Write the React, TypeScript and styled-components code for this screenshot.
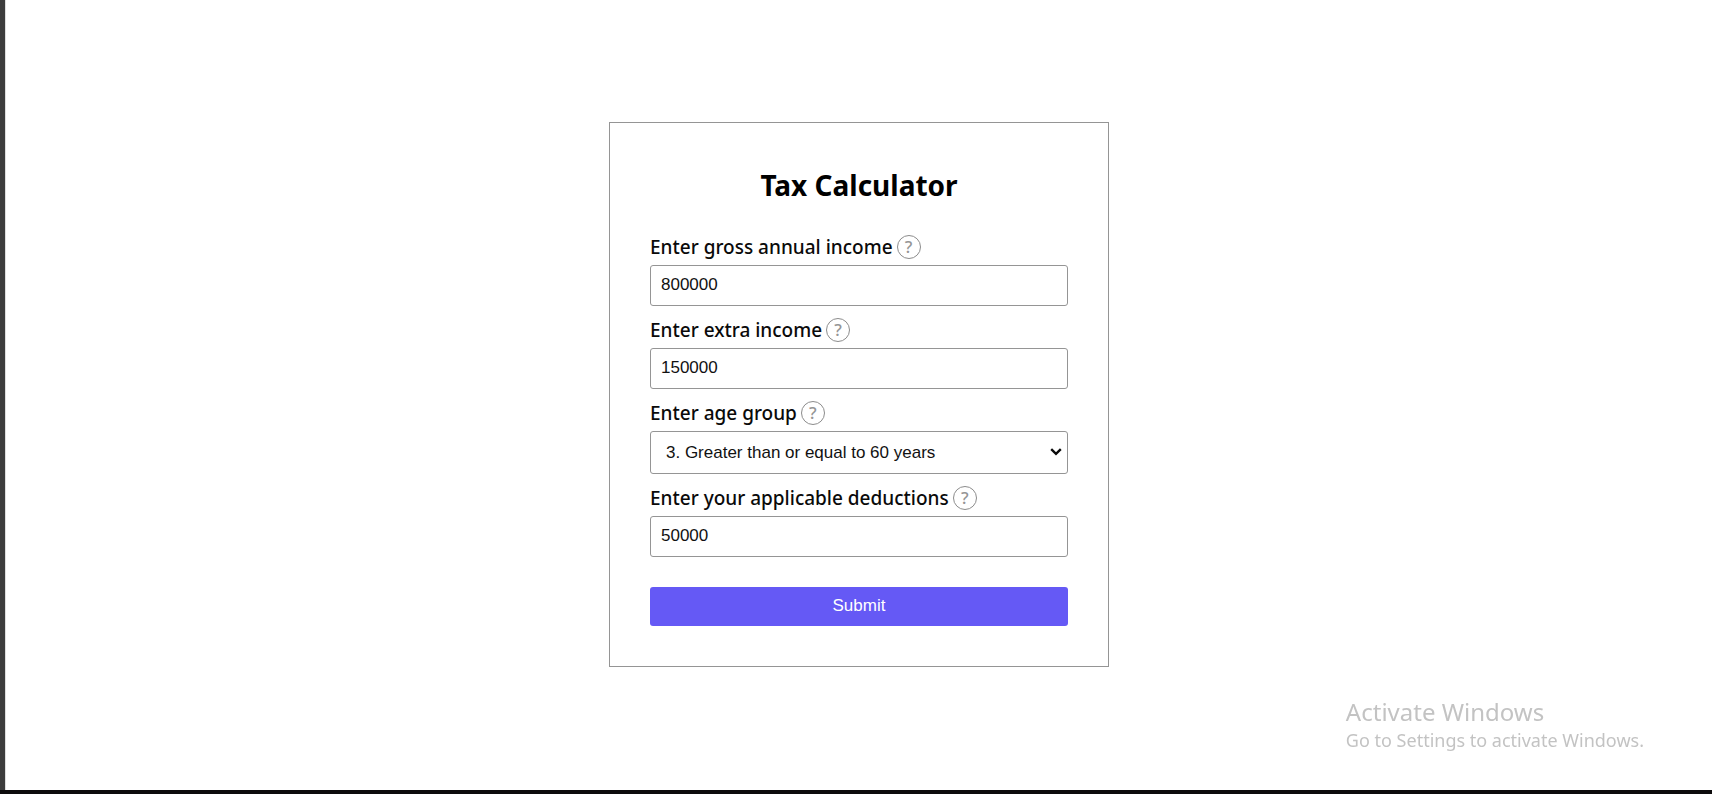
import { useState } from "react";
import styled, { createGlobalStyle } from "styled-components";

const GlobalStyle = createGlobalStyle`
  * { box-sizing: border-box; }
  body {
    margin: 0;
    background: #fff;
    color: #0a0a0a;
    font-family: "Segoe UI", "Noto Sans", sans-serif;
  }
`;

const Page = styled.div`
  display: flex;
  min-height: 100vh;
  border-bottom: 4px solid #0d0b0c;
`;

const Edge = styled.div`
  flex: none;
  width: 5px;
  background: #3c3c3c;
`;

const Main = styled.main`
  flex: 1;
  display: flex;
  align-items: center;
  justify-content: center;
  padding-bottom: 2px;
  border-left: 1px solid #dedede;
`;

const Card = styled.form`
  width: 500px;
  max-width: 100%;
  padding: 40px;
  border: 1px solid #959595;
`;

const Title = styled.h1`
  margin: 0 0 28px;
  color: #000;
  font-size: 28px;
  line-height: 44px;
  font-weight: 700;
  text-align: center;
`;

const Field = styled.div`
  margin-bottom: 12px;
`;

const LabelRow = styled.div`
  display: flex;
  align-items: center;
  gap: 4px;
  margin-bottom: 6px;
`;

const Label = styled.label`
  font-size: 19px;
  line-height: 24px;
  font-weight: 500;
`;

const HelpButton = styled.button`
  width: 24px;
  height: 24px;
  padding: 0;
  border: 1px solid #8c8c8c;
  border-radius: 50%;
  background: #fff;
  color: #959595;
  font-family: inherit;
  font-size: 17px;
  line-height: 22px;
  font-weight: 500;
  text-align: center;
`;

const TextInput = styled.input`
  display: block;
  width: 100%;
  height: 41px;
  padding: 0 10px;
  border: 1px solid #959595;
  border-radius: 3px;
  background: #fff;
  color: #111;
  font-family: "Liberation Sans", Arial, sans-serif;
  font-size: 17px;
`;

const SelectBox = styled.div`
  display: grid;
  align-items: center;

  > * {
    grid-area: 1 / 1;
  }
`;

const Select = styled.select`
  appearance: none;
  width: 100%;
  height: 43px;
  padding: 0 24px 0 15px;
  border: 1px solid #959595;
  border-radius: 3px;
  background: #fff;
  color: #111;
  font-family: "Liberation Sans", Arial, sans-serif;
  font-size: 17px;
`;

const Chevron = styled.svg`
  justify-self: end;
  margin-right: 6px;
  pointer-events: none;
`;

const SubmitButton = styled.button`
  display: block;
  width: 100%;
  height: 39px;
  margin-top: 30px;
  border: 0;
  border-radius: 3px;
  background: #6559f5;
  color: #fff;
  font-family: "Liberation Sans", Arial, sans-serif;
  font-size: 17px;
`;

const Watermark = styled.aside`
  position: fixed;
  right: 68px;
  bottom: 42px;
  color: #c3c3c3;
`;

const WatermarkTitle = styled.div`
  font-size: 24px;
  line-height: 32px;
`;

const WatermarkText = styled.div`
  font-size: 18px;
  line-height: 24px;
`;

const ageGroups = [
  "1. Less than 40 years",
  "2. Between 40 and 60 years",
  "3. Greater than or equal to 60 years",
];

function FieldLabel({ id, text }: { id: string; text: string }) {
  return (
    <LabelRow>
      <Label htmlFor={id}>{text}</Label>
      <HelpButton type="button">?</HelpButton>
    </LabelRow>
  );
}

function AmountField({ id, text, initial }: { id: string; text: string; initial: string }) {
  const [value, setValue] = useState(initial);
  return (
    <Field>
      <FieldLabel id={id} text={text} />
      <TextInput id={id} value={value} onChange={(e) => setValue(e.target.value)} />
    </Field>
  );
}

export default function App() {
  return (
    <>
      <GlobalStyle />
      <Page>
        <Edge />
        <Main>
          <Card onSubmit={(e) => e.preventDefault()}>
            <Title>Tax Calculator</Title>
            <AmountField id="gross" text="Enter gross annual income" initial="800000" />
            <AmountField id="extra" text="Enter extra income" initial="150000" />
            <Field>
              <FieldLabel id="age" text="Enter age group" />
              <SelectBox>
                <Select id="age" defaultValue={ageGroups[2]}>
                  {ageGroups.map((group) => (
                    <option key={group}>{group}</option>
                  ))}
                </Select>
                <Chevron width="12" height="8" viewBox="0 0 12 8" aria-hidden="true">
                  <path d="M1.2 1.2 6 5.8l4.800-4.600" fill="none" stroke="#0a0a0a" strokeWidth="2.400" />
                </Chevron>
              </SelectBox>
            </Field>
            <AmountField id="deductions" text="Enter your applicable deductions" initial="50000" />
            <SubmitButton type="submit">Submit</SubmitButton>
          </Card>
        </Main>
        <Watermark>
          <WatermarkTitle>Activate Windows</WatermarkTitle>
          <WatermarkText>Go to Settings to activate Windows.</WatermarkText>
        </Watermark>
      </Page>
    </>
  );
}
